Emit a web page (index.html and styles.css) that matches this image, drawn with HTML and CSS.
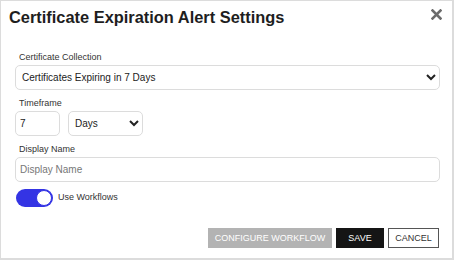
FILE: index.html
```html
<!DOCTYPE html>
<html lang="en">

<head>
    <meta charset="UTF-8" />
    <meta name="viewport" content="width=device-width, initial-scale=1.0" />
    <title>Certificate Expiration Alert Settings</title>
    <link rel="stylesheet" href="styles.css">
</head>

<body>
    <div class="dialog">
        <div class="dialog_head">
            <h1>Certificate Expiration Alert Settings</h1>
            <button type="button" class="close_btn" aria-label="Close">
                <svg width="11" height="11" viewBox="0 0 11 11">
                    <path d="M1.5 1.5 L9.5 9.5 M9.5 1.5 L1.5 9.5" stroke="#6b6b6b" stroke-width="2.6" stroke-linecap="square" />
                </svg>
            </button>
        </div>
        <form class="dialog_body">
            <label for="collection">Certificate Collection</label>
            <select id="collection" class="field wide">
                <option>Certificates Expiring in 7 Days</option>
            </select>

            <label for="timeframe">Timeframe</label>
            <div class="row">
                <input id="timeframe" class="field num" type="text" value="7" />
                <select id="unit" class="field unit">
                    <option>Days</option>
                </select>
            </div>

            <label for="display_name">Display Name</label>
            <input id="display_name" class="field wide" type="text" placeholder="Display Name" />

            <label class="switch">
                <input type="checkbox" checked />
                <span class="track"></span>
                <span class="switch_text">Use Workflows</span>
            </label>

            <div class="btn_box">
                <button type="button" class="btn btn_gray">Configure Workflow</button>
                <button type="button" class="btn btn_dark">Save</button>
                <button type="button" class="btn btn_light">Cancel</button>
            </div>
        </form>
    </div>
</body>

</html>
```

FILE: styles.css
```css
* {
    box-sizing: border-box;
}

body {
    margin: 0;
    font-family: "Liberation Sans", Arial, sans-serif;
    background: #fff;
}

.dialog {
    width: 454px;
    height: 260px;
    border: 1px solid #dcdcdc;
    border-right-width: 2px;
    border-bottom-width: 2px;
    display: flex;
    flex-direction: column;
}

.dialog_head {
    display: flex;
    justify-content: space-between;
    align-items: flex-start;
    padding: 6px 10px 0 8px;
}

h1 {
    margin: 0;
    font-size: 16.4px;
    line-height: 20px;
    font-weight: 700;
    color: #1e1e1e;
}

.close_btn {
    border: none;
    background: none;
    padding: 0;
    margin-top: 2px;
    width: 11px;
    height: 11px;
    display: flex;
}

.dialog_body {
    flex: 1;
    display: flex;
    flex-direction: column;
    padding: 24px 13px 10px 14px;
}

label {
    display: block;
    font-size: 9px;
    line-height: 12px;
    color: #333;
    padding-left: 4px;
    margin-bottom: 2px;
}

.field {
    height: 25px;
    border: 1px solid #dcdcdc;
    border-radius: 5px;
    background: #fff;
    font-family: "Liberation Sans", Arial, sans-serif;
    font-size: 10px;
    color: #222;
    margin-bottom: 7px;
}

.wide {
    width: 425px;
}

select.field {
    padding-left: 2px;
}

input.field {
    padding-left: 4px;
}

input.field::placeholder {
    color: #777;
}

.row {
    display: flex;
    gap: 8px;
}

.num {
    width: 45px;
}

.unit {
    width: 75px;
}

.switch {
    display: flex;
    align-items: center;
    gap: 5px;
    padding-left: 1px;
    margin: 0;
    cursor: pointer;
}

.switch input {
    display: none;
}

.track {
    position: relative;
    width: 37px;
    height: 18px;
    border-radius: 9px;
    background: #3434e4;
}

.track::after {
    content: "";
    position: absolute;
    top: 1px;
    right: 1px;
    width: 16px;
    height: 16px;
    border-radius: 50%;
    background: #fff;
    border: 1.5px solid #3434e4;
    box-sizing: border-box;
}

.switch_text {
    font-size: 9px;
    color: #333;
    margin-top: -2px;
}

.btn_box {
    margin-top: auto;
    display: flex;
    justify-content: flex-end;
    gap: 4px;
}

.btn {
    height: 20px;
    padding: 0;
    font-family: "Liberation Sans", Arial, sans-serif;
    font-size: 9px;
    text-transform: uppercase;
    white-space: nowrap;
    border: none;
    border-radius: 0;
}

.btn_gray {
    background: #b3b3b3;
    color: #fff;
    width: 124px;
}

.btn_dark {
    background: #151515;
    color: #fff;
    width: 48px;
}

.btn_light {
    background: #fff;
    color: #333;
    border: 1.5px solid #555;
    width: 51px;
}
```
